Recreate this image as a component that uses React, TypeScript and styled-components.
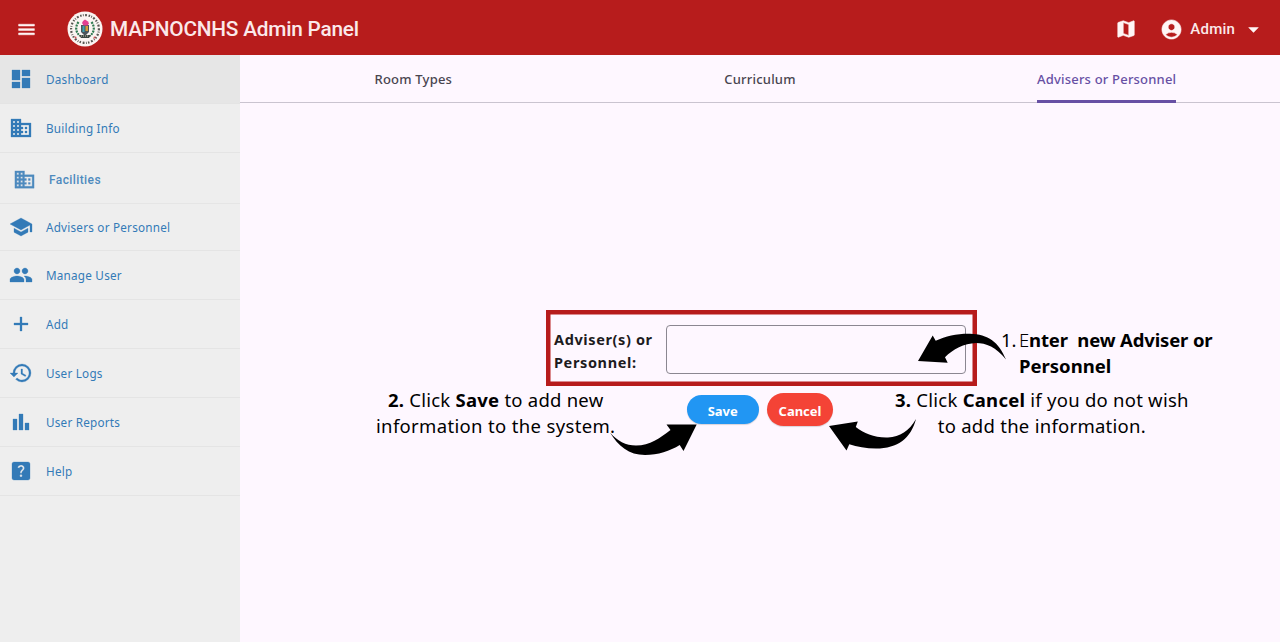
import React from "react";
import styled, { createGlobalStyle } from "styled-components";
import {
  MdMenu, MdMap, MdAccountCircle, MdArrowDropDown, MdDashboard, MdBusiness,
  MdSchool, MdPeople, MdAdd, MdHistory, MdBarChart, MdHelpCenter,
} from "react-icons/md";

const GlobalStyle = createGlobalStyle`
  * { box-sizing: border-box; }
  body { margin: 0; background: #fef7ff; font-family: "Noto Sans", "Open Sans", sans-serif; }
  svg { display: block; flex: none; }
`;

const Page = styled.div`
  position: relative;
  display: flex;
  flex-direction: column;
  width: 1280px;
  height: 642px;
  overflow: hidden;
`;

const Header = styled.header`
  display: flex;
  align-items: center;
  flex: none;
  height: 55px;
  padding: 3px 15px 0 16px;
  background: #b71c1c;
  color: #fbe9ea;
  font-family: Roboto, sans-serif;
  > svg, > div > svg { color: #fff5f5; }
  > svg path:not([fill="none"]), > div > svg path:not([fill="none"]) {
    stroke: currentColor;
    stroke-width: 0.6px;
  }
`;

const Brand = styled.h1`
  display: flex;
  align-items: center;
  gap: 7px;
  margin: 0 auto 0 30px;
  font-size: 20.8px;
  font-weight: 500;
  line-height: 30px;
  letter-spacing: -0.22px;
  white-space: nowrap;
`;

const Account = styled.div`
  display: flex;
  align-items: center;
  gap: 7px;
  margin-left: 23px;
  font-size: 15px;
  font-weight: 500;
  letter-spacing: 0.2px;
`;

const Body = styled.div`
  display: flex;
  flex: 1;
  min-height: 0;
`;

const Sidebar = styled.nav`
  flex: none;
  width: 240px;
  background: #eeeeee;
`;

const NavItem = styled.a<{ $height?: number; $active?: boolean; $indent?: number; $soft?: boolean }>`
  display: flex;
  align-items: center;
  gap: 13px;
  height: ${(p) => p.$height ?? 49}px;
  padding-top: ${(p) => (p.$soft ? 3 : 0)}px;
  padding-left: ${(p) => 9 + (p.$indent ?? 0)}px;
  border-bottom: 1px solid #e4e4e4;
  background: ${(p) => (p.$active ? "#e6e6e6" : "transparent")};
  color: #337ab7;
  opacity: ${(p) => (p.$soft ? 0.86 : 1)};
  font-family: ${(p) => (p.$soft ? "Roboto" : '"Noto Sans"')}, sans-serif;
  font-size: ${(p) => (p.$soft ? 12 : 11.7)}px;
  font-weight: ${(p) => (p.$soft ? 500 : 400)};
  letter-spacing: ${(p) => (p.$soft ? 0.4 : 0.23)}px;
  white-space: nowrap;
  svg path:not([fill="none"]) {
    stroke: currentColor;
    stroke-width: 0.3px;
  }
`;

const Main = styled.main`
  display: flex;
  flex-direction: column;
  flex: 1;
  background: #fef7ff;
`;

const Tabs = styled.div`
  display: grid;
  grid-template-columns: repeat(3, 1fr);
  justify-items: center;
  height: 48px;
  border-bottom: 1px solid #cac4d0;
`;

const Tab = styled.div<{ $active?: boolean }>`
  height: 48px;
  line-height: 48px;
  font-size: 13px;
  font-weight: 500;
  letter-spacing: 0.2px;
  color: ${(p) => (p.$active ? "#6750a4" : "#49454f")};
  border-bottom: 3px solid ${(p) => (p.$active ? "#6750a4" : "transparent")};
  border-radius: 2px 2px 0 0;
  white-space: nowrap;
`;

const Form = styled.form`
  display: flex;
  flex-direction: column;
  align-self: flex-start;
  margin: 207px 0 0 306px;
`;

const Field = styled.label`
  display: flex;
  align-items: center;
  width: 431px;
  height: 76px;
  padding-left: 4px;
  border: 4px solid #b71c1c;
  box-shadow: inset 0 0 0 0.5px #b71c1c;
  font-size: 14.5px;
  font-weight: 700;
  line-height: 23px;
  color: #1d1b20;
`;

const FieldName = styled.span`
  width: 112px;
  padding-top: 6px;
  letter-spacing: 0.62px;
  white-space: nowrap;
`;

const Input = styled.input`
  width: 300px;
  height: 49px;
  margin-top: 3px;
  border: 1px solid #8b8791;
  border-radius: 4px;
  background: transparent;
  outline: none;
`;

const Actions = styled.div`
  display: flex;
  align-items: center;
  gap: 8px;
  margin: 7px 0 0 140.5px;
`;

const Button = styled.button<{ $color: string; $width: number; $height: number }>`
  width: ${(p) => p.$width}px;
  height: ${(p) => p.$height}px;
  padding: 3px 0 0;
  border: 0;
  border-radius: 17px;
  background: ${(p) => p.$color};
  box-shadow: 0 1px 1px rgba(0, 0, 0, 0.15);
  color: #fff;
  font: 700 13px "Noto Sans", sans-serif;
  letter-spacing: 0;
`;

const Note = styled.div<{ $x: number; $y: number; $align?: string }>`
  position: absolute;
  left: ${(p) => p.$x}px;
  top: ${(p) => p.$y}px;
  display: flex;
  flex-direction: column;
  align-items: ${(p) => p.$align ?? "center"};
  color: #000;
  font-size: 18.5px;
`;

const Line = styled.span<{ $spacing?: number }>`
  height: 26px;
  line-height: 26px;
  letter-spacing: ${(p) => p.$spacing ?? 0}px;
  white-space: pre;
`;

const Light = styled.span`
  font-weight: 300;
`;

const Arrows = styled.svg`
  position: absolute;
  inset: 0;
  pointer-events: none;
`;

const Seal = () => (
  <svg width="36" height="36" viewBox="0 0 36 36">
    <circle cx="18" cy="18" r="17.5" fill="#fbf4f2" />
    <circle cx="18" cy="18" r="13.9" fill="none" stroke="#55544f" strokeWidth="2.2" strokeDasharray="1.4 1.3 0.8 1.5 1.9 1.7" />
    <path d="M11.5 11c-3.5 5-3 10 1.5 14M24.5 11c3.5 5 3 10-1.5 14" fill="none" stroke="#2f7a50" strokeWidth="2.2" strokeDasharray="2 1" />
    <path d="M14 14h8v7l-4 4-4-4z" fill="#4b545b" />
    <path d="M15.5 15h2v6h-2z" fill="#3ba2b3" />
    <path d="M18.5 15h2.5v5h-2.5z" fill="#d69b38" />
    <path d="M15 12l1-2 2-1.5 3 2 1 2-1.5 2h-4z" fill="#e43f91" />
    <path d="M12 24h12l-2 3h-8z" fill="#3d4642" />
    <path d="M14 25h7" stroke="#e9dfcf" strokeWidth="0.8" strokeDasharray="1 1" />
    <circle cx="8.5" cy="26.5" r="1" fill="#d65458" />
    <circle cx="27.5" cy="26.5" r="1" fill="#d65458" />
  </svg>
);

const items = [
  { label: "Dashboard", Icon: MdDashboard, active: true },
  { label: "Building Info", Icon: MdBusiness },
  { label: "Facilities", Icon: MdBusiness, height: 51, indent: 4, soft: true },
  { label: "Advisers or Personnel", Icon: MdSchool, height: 47 },
  { label: "Manage User", Icon: MdPeople },
  { label: "Add", Icon: MdAdd },
  { label: "User Logs", Icon: MdHistory },
  { label: "User Reports", Icon: MdBarChart },
  { label: "Help", Icon: MdHelpCenter },
];

export default function App() {
  return (
    <Page>
      <GlobalStyle />
      <Header>
        <MdMenu size={21} />
        <Brand><Seal />MAPNOCNHS Admin Panel</Brand>
        <MdMap size={22} />
        <Account><MdAccountCircle size={23} />Admin<MdArrowDropDown size={23} /></Account>
      </Header>
      <Body>
        <Sidebar>
          {items.map(({ label, Icon, active, height, indent, soft }) => (
            <NavItem key={label} $active={active} $height={height} $indent={indent} $soft={soft}>
              <Icon size={soft ? 23 : 24} />{label}
            </NavItem>
          ))}
        </Sidebar>
        <Main>
          <Tabs>
            <Tab>Room Types</Tab>
            <Tab>Curriculum</Tab>
            <Tab $active>Advisers or Personnel</Tab>
          </Tabs>
          <Form>
            <Field>
              <FieldName>Adviser(s) or<br />Personnel:</FieldName>
              <Input />
            </Field>
            <Actions>
              <Button type="button" $color="#2196f3" $width={72.5} $height={29}>Save</Button>
              <Button type="button" $color="#f44336" $width={66} $height={33}>Cancel</Button>
            </Actions>
          </Form>
        </Main>
      </Body>
      <Note $x={1001} $y={327}><Line>1.</Line></Note>
      <Note $x={1019} $y={327} $align="flex-start">
        <Line $spacing={-0.14}><Light>E</Light><b>{"nter  new Adviser or"}</b></Line>
        <Line><b>Personnel</b></Line>
      </Note>
      <Note $x={376} $y={387}>
        <Line $spacing={0.24}><b>2.</b> Click <b>Save</b> to add new</Line>
        <Line $spacing={0.34}>information to the system.</Line>
      </Note>
      <Note $x={895} $y={387}>
        <Line $spacing={0.25}><b>3.</b> Click <b>Cancel</b> if you do not wish</Line>
        <Line $spacing={0.27}>to add the information.</Line>
      </Note>
      <Arrows width="1280" height="642" viewBox="0 0 1280 642">
        <path d="M918 361L932.7 335.5L935.7 340.7C946 336 957 333.5 970 333.7C988 334.2 999 342 1006 359.5C996 347 986 343 976 343C964 343.5 953 349 945 357.3L947.7 362.7Z" />
        <path d="M610 432.5C618 446 629 455 645 455C658 455 670 451 679.7 445L683.5 451L696.7 424.5H666.5L670.5 430C660 438 650 445.5 636 445.5C626 445.5 617 441 610 432.5Z" />
        <path d="M829 426L857.8 421.6L855.8 427C864 433.5 875 438 888 437.5C900 437 909 431 916 419C911 438 898 448.5 876 448.5C866 448.5 857 447 849.3 444.3L846.5 450.5Z" />
      </Arrows>
    </Page>
  );
}
